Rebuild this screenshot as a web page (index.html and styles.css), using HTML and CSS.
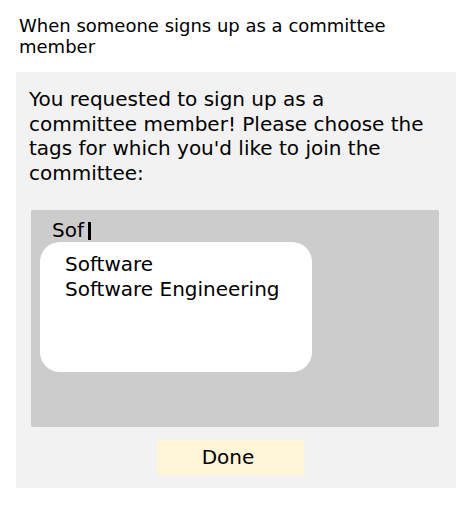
FILE: index.html
```html
<!DOCTYPE html>
<html>
<head>
<meta charset="utf-8">
<link rel="stylesheet" href="styles.css">
</head>
<body>
  <div class="title">When someone signs up as a committee member</div>
  <div class="panel">
    <p class="message">You requested to sign up as a committee member! Please choose the tags for which you'd like to join the committee:</p>
    <div class="picker">
      <div class="input">Sof<span class="cursor"></span></div>
      <div class="suggestions">
        <div class="option">Software</div>
        <div class="option">Software Engineering</div>
      </div>
    </div>
    <div class="actions">
      <div class="done">Done</div>
    </div>
  </div>
</body>
</html>
```

FILE: styles.css
```css
html, body {
  margin: 0;
  padding: 0;
  background: #ffffff;
}
body {
  font-family: "DejaVu Sans", Verdana, sans-serif;
  color: #000000;
  width: 469px;
}
.title {
  font-size: 18px;
  line-height: 21.7px;
  padding: 14.5px 0 0 19px;
  width: 420px;
}
.panel {
  margin: 14px 0 0 16px;
  width: 440px;
  background: #f2f2f2;
  padding: 15px 0 13px 0;
  box-sizing: border-box;
}
.message {
  margin: 0;
  padding: 0 30px 0 13px;
  font-size: 20px;
  line-height: 24.7px;
}
.picker {
  margin: 24px 0 0 15px;
  width: 408px;
  height: 217px;
  background: #cccccc;
  border-radius: 2px;
  padding-top: 8px;
  box-sizing: border-box;
}
.input {
  font-size: 20px;
  line-height: 24px;
  padding-left: 21px;
}
.cursor {
  display: inline-block;
  width: 3px;
  height: 18px;
  background: #000000;
  margin-left: 4px;
  vertical-align: -3px;
}
.suggestions {
  margin-left: 9px;
  width: 272px;
  height: 130px;
  background: #ffffff;
  border-radius: 20px;
  padding: 10px 0 0 25px;
  box-sizing: border-box;
}
.option {
  font-size: 20px;
  line-height: 25px;
}
.actions {
  margin-top: 13px;
  padding-left: 141px;
}
.done {
  width: 147px;
  height: 35px;
  line-height: 35px;
  background: #fff5d7;
  border-radius: 2px;
  font-size: 20px;
  text-align: center;
  padding-right: 5px;
  box-sizing: border-box;
}
```
